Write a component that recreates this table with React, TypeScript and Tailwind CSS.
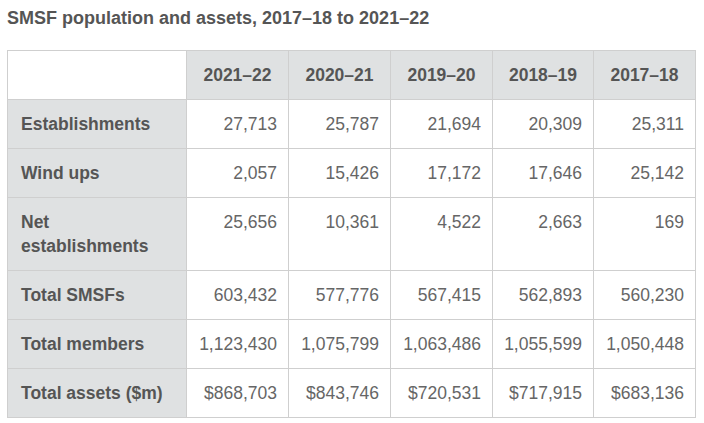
import React from 'react'

const years = ['2021–22', '2020–21', '2019–20', '2018–19', '2017–18']

const rows: { label: React.ReactNode; values: string[] }[] = [
  { label: 'Establishments', values: ['27,713', '25,787', '21,694', '20,309', '25,311'] },
  { label: 'Wind ups', values: ['2,057', '15,426', '17,172', '17,646', '25,142'] },
  { label: <>Net<br />establishments</>, values: ['25,656', '10,361', '4,522', '2,663', '169'] },
  { label: 'Total SMSFs', values: ['603,432', '577,776', '567,415', '562,893', '560,230'] },
  { label: 'Total members', values: ['1,123,430', '1,075,799', '1,063,486', '1,055,599', '1,050,448'] },
  { label: 'Total assets ($m)', values: ['$868,703', '$843,746', '$720,531', '$717,915', '$683,136'] },
]

function App() {
  return (
    <div className="w-[704px] h-[423px] bg-white font-['Liberation_Sans',Arial,sans-serif] text-[#555]">
      <h2 className="pl-[7px] pt-[7px] text-[18px] leading-[22px] font-bold text-[#555]">
        SMSF population and assets, 2017–18 to 2021–22
      </h2>
      <table className="ml-[7px] mt-[21px] border-collapse table-fixed w-[689px] text-[17.5px] leading-[24px]">
        <colgroup>
          <col className="w-[179px]" />
          <col className="w-[102px]" />
          <col className="w-[102px]" />
          <col className="w-[102px]" />
          <col className="w-[101px]" />
          <col className="w-[102px]" />
        </colgroup>
        <thead>
          <tr>
            <th className="border border-[#cfcfcf] bg-white"></th>
            {years.map((y) => (
              <th key={y} className="border border-[#cfcfcf] bg-[#dfe1e2] py-3 text-center font-bold text-[#555]">
                {y}
              </th>
            ))}
          </tr>
        </thead>
        <tbody>
          {rows.map((r, i) => (
            <tr key={i}>
              <th className="border border-[#cfcfcf] bg-[#dfe1e2] pl-[13px] pr-1 py-3 text-left align-top font-bold text-[#555]">
                {r.label}
              </th>
              {r.values.map((v, j) => (
                <td key={j} className="border border-[#cfcfcf] pr-[11px] pl-1 py-3 text-right align-top text-[#666]">
                  {v}
                </td>
              ))}
            </tr>
          ))}
        </tbody>
      </table>
    </div>
  )
}

export default App
